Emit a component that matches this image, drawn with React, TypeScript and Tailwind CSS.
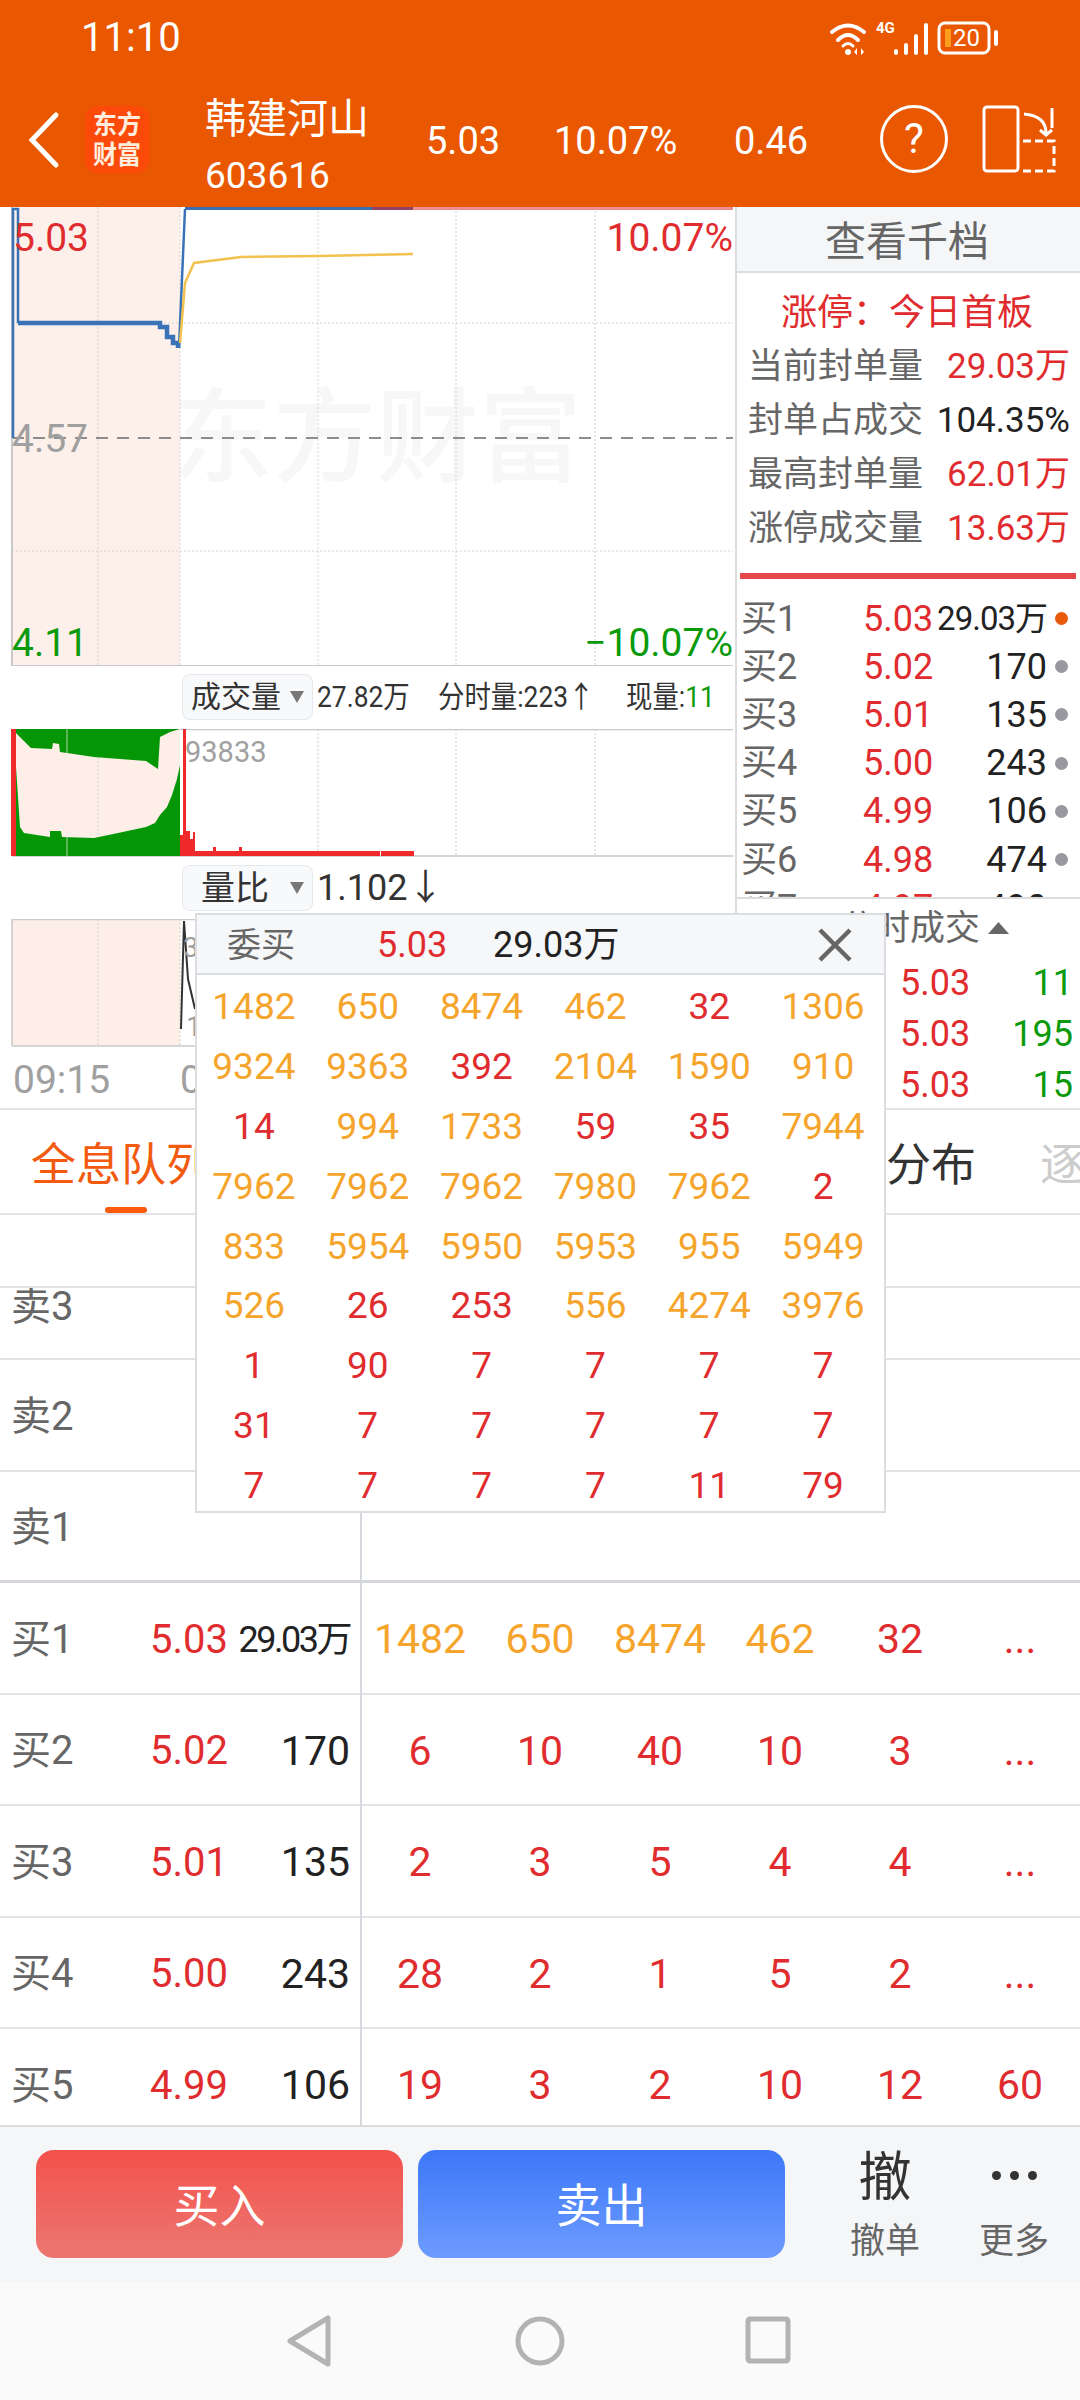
import type { ReactNode } from "react";

const FONT = "font-[Roboto,'Noto_Sans_CJK_SC',sans-serif]";

const popupRows = [
  [1482, 650, 8474, 462, 32, 1306],
  [9324, 9363, 392, 2104, 1590, 910],
  [14, 994, 1733, 59, 35, 7944],
  [7962, 7962, 7962, 7980, 7962, 2],
  [833, 5954, 5950, 5953, 955, 5949],
  [526, 26, 253, 556, 4274, 3976],
  [1, 90, 7, 7, 7, 7],
  [31, 7, 7, 7, 7, 7],
  [7, 7, 7, 7, 11, 79],
];

const sealStats = [
  { label: "当前封单量", value: "29.03万", red: true },
  { label: "封单占成交", value: "104.35%", red: false },
  { label: "最高封单量", value: "62.01万", red: true },
  { label: "涨停成交量", value: "13.63万", red: true },
];

const bidRows = [
  { name: "买1", price: "5.03", vol: "29.03万", active: true },
  { name: "买2", price: "5.02", vol: "170" },
  { name: "买3", price: "5.01", vol: "135" },
  { name: "买4", price: "5.00", vol: "243" },
  { name: "买5", price: "4.99", vol: "106" },
  { name: "买6", price: "4.98", vol: "474" },
  { name: "买7", price: "4.97", vol: "490" },
];

const queueRows = [
  { name: "买1", price: "5.03", vol: "29.03万", orders: [1482, 650, 8474, 462, 32] },
  { name: "买2", price: "5.02", vol: "170", orders: [6, 10, 40, 10, 3] },
  { name: "买3", price: "5.01", vol: "135", orders: [2, 3, 5, 4, 4] },
  { name: "买4", price: "5.00", vol: "243", orders: [28, 2, 1, 5, 2] },
  { name: "买5", price: "4.99", vol: "106", orders: [19, 3, 2, 10, 12, 60] },
];

function orderColor(n: number) {
  return n >= 400 ? "text-[#f5a42c]" : "text-[#e02c2e]";
}

function StatusBar() {
  return (
    <div className="flex h-[75px] items-center pl-[81px] pr-[82px] text-white">
      <span className="text-[40px] leading-none">11:10</span>
      <div className="ml-auto flex items-center">
        <svg width="166" height="36" viewBox="0 0 166 36" fill="none" stroke="#fff" strokeLinecap="round">
          <path d="M7 12 Q23 -1 39 12" strokeWidth="4" />
          <path d="M13 20 Q23 10 33 20" strokeWidth="4" />
          <path d="M18 26 Q23 21 28 26" strokeWidth="3" />
          <circle cx="23" cy="32" r="3" fill="#fff" stroke="none" />
          <path d="M32 28 L32 35 L29 32 Z M36 28 L36 35 L39 32 Z" fill="#fff" stroke="none" />
          <g strokeWidth="4">
            <path d="M71 31 V33 M81 25 V33 M91 16 V33 M101 5 V33" />
          </g>
          <rect x="114" y="3" width="50" height="30" rx="6" strokeWidth="3" />
          <rect x="120" y="9" width="6" height="18" fill="#ff9d1c" stroke="none" />
        </svg>
        <div className="relative">
          <span className="absolute left-[-115px] top-[-17px] text-[15px] font-bold leading-none">4G</span>
          <span className="absolute left-[-38px] top-[-12px] text-[24px] leading-none">20</span>
        </div>
        <div className="ml-[3px] h-[16px] w-[4px] rounded-full bg-white" />
      </div>
    </div>
  );
}

function HeaderBar() {
  return (
    <div className="flex h-[132px] items-start text-white">
      <svg className="ml-[26px] mt-[36px] shrink-0" width="36" height="58" viewBox="0 0 36 58" fill="none" stroke="#fff" strokeWidth="5" strokeLinecap="round">
        <path d="M30 4 L6 29 L30 54" />
      </svg>
      <div className="ml-[23px] mt-[31px] flex h-[67px] w-[64px] shrink-0 flex-col items-center justify-center rounded-[12px] bg-[#fb4a0a] text-[24px] font-bold leading-[30px] text-[#ffeede]">
        <span className="scale-y-110">东方</span>
        <span className="scale-y-110">财富</span>
      </div>
      <div className="ml-[56px] mt-[19px] w-[221px] shrink-0">
        <div className="text-[41px] leading-[50px]">韩建河山</div>
        <div className="mt-[12px] text-[37px] leading-[40px]">603616</div>
      </div>
      <div className="mt-[43px] flex text-[38px] leading-[46px]">
        <span className="w-[128px]">5.03</span>
        <span className="w-[180px]">10.07%</span>
        <span className="w-[146px]">0.46</span>
      </div>
      <div className="mt-[30px] flex h-[68px] w-[68px] shrink-0 items-center justify-center rounded-full border-[3px] border-white text-[42px] leading-none">?</div>
      <svg className="ml-[34px] mt-[30px] shrink-0" width="74" height="68" viewBox="0 0 74 68" fill="none" stroke="#fff" strokeWidth="3">
        <rect x="2" y="2" width="34" height="64" rx="3" />
        <path d="M41 36 H72 V66 H41" strokeDasharray="8 4" />
        <path d="M42 9 Q64 11 64 28 M70 3 V23 M58 25 L64 30 L70 25" />
      </svg>
    </div>
  );
}

function PriceChart() {
  return (
    <div className="relative h-[459px] w-[736px] overflow-hidden">
      <div className="absolute left-[170px] top-[180px] text-[103px] font-medium leading-none text-[#f7f7f7]">东方财富</div>
      <svg className="absolute inset-0" width="736" height="459" viewBox="0 0 736 459" fill="none">
        <rect x="12" y="0" width="168" height="459" fill="#fdeee8" fillOpacity="0.9" />
        <g stroke="#d2d2d2" strokeDasharray="2 2">
          <path d="M98 0 V459 M180 0 V459 M318 0 V459 M456 0 V459 M595 0 V459" />
          <path d="M12 116 H733 M12 344 H733" />
        </g>
        <path d="M12 231 H733" stroke="#8c8c8c" strokeWidth="2" strokeDasharray="12 9" />
        <path d="M12 0 V459 H733" stroke="#c9c9c9" strokeWidth="2" />
        <path d="M185 1.5 H372" stroke="#3a6fb5" strokeWidth="3" />
        <path d="M372 1.5 H413" stroke="#8f4263" strokeWidth="3" />
        <path d="M413 1.5 H733" stroke="#ee8d8d" strokeWidth="3" />
        <path d="M13 231 V2 H18 V116" stroke="#3a72b8" strokeWidth="2.5" />
        <path d="M18 116 H160 V120 H167 V130 H173 V136 H178 V141" stroke="#3a72b8" strokeWidth="4.5" />
        <path d="M179 141 L185 2" stroke="#3a72b8" strokeWidth="2.5" />
        <path d="M180 136 L185 76 L194 56 L241 50 L319 49 L413 47" stroke="#f2c14e" strokeWidth="2.5" />
      </svg>
      <span className="absolute left-[13px] top-[8px] text-[39px] leading-[46px] text-[#e02c2e]">5.03</span>
      <span className="absolute right-[3px] top-[8px] text-[39px] leading-[46px] text-[#e02c2e]">10.07%</span>
      <span className="absolute left-[12px] top-[209px] text-[39px] leading-[46px] text-[#a0a0a0]">4.57</span>
      <span className="absolute left-[12px] top-[413px] text-[39px] leading-[46px] text-[#0b9a0b]">4.11</span>
      <span className="absolute right-[3px] top-[413px] text-[39px] leading-[46px] text-[#0b9a0b]">−10.07%</span>
    </div>
  );
}

function Selector({ children, wide }: { children: ReactNode; wide?: boolean }) {
  return (
    <div className="ml-[182px] flex h-[46px] w-[131px] shrink-0 items-center rounded-[8px] border border-[#e6e8eb] bg-[#f8f9fb]">
      <span className={`leading-none text-[#333] ${wide ? "ml-[8px] w-[97px] text-[30px]" : "ml-[18px] w-[87px] text-[34px]"}`}>{children}</span>
      <svg width="16" height="14" viewBox="0 0 16 14" className="ml-[1px]">
        <path d="M1 1 H15 L8 13 Z" fill="#777" />
      </svg>
    </div>
  );
}

function Squeezed({ children, className }: { children: ReactNode; className?: string }) {
  return <span className={`inline-block origin-left scale-x-[0.88] whitespace-nowrap ${className ?? ""}`}>{children}</span>;
}

function VolumeChart() {
  return (
    <div className="relative h-[127px] w-[736px]">
      <svg className="absolute inset-0" width="736" height="128" viewBox="0 0 736 128" fill="none">
        <rect x="12" y="0" width="168" height="127" fill="#fdeee8" />
        <g stroke="#cfcfcf" strokeDasharray="2 2">
          <path d="M98 0 V127 M318 0 V127 M456 0 V127 M595 0 V127" />
        </g>
        <path d="M180 0.5 H733 M12 127 H733" stroke="#c9c9c9" strokeWidth="1.5" />
        <polygon points="16,0 180,0 170,3 160,8 158,40 146,32 94,28 60,23 59,15 53,14 52,20 31,19 16,4" fill="#059605" />
        <polygon points="16,38 20,98 24,104 50,108 50,102 61,102 62,108 94,109 118,104 146,98 155,94 160,86 167,78 172,66 177,50 180,36 180,127 16,127" fill="#059605" />
        <path d="M67 0 V127" stroke="#fdeee8" strokeOpacity="0.7" />
        <g fill="#f02a2a">
          <rect x="11" y="0" width="5" height="127" />
          <rect x="180" y="106" width="4" height="21" />
          <rect x="183" y="0" width="3" height="127" />
          <rect x="186" y="102" width="4" height="25" />
          <rect x="190" y="110" width="3" height="17" />
          <rect x="193" y="103" width="2" height="24" />
          <rect x="195" y="122" width="185" height="5" />
          <rect x="381" y="122" width="33" height="5" />
          <rect x="213" y="118" width="3" height="5" />
          <rect x="239" y="118" width="3" height="5" />
        </g>
      </svg>
      <span className="absolute left-[185px] top-[6px] text-[29px] leading-[34px] text-[#a0a0a0]">93833</span>
    </div>
  );
}

function RatioChart() {
  return (
    <div className="relative h-[128px] w-[736px]">
      <svg className="absolute inset-0" width="736" height="128" viewBox="0 0 736 128" fill="none">
        <rect x="12" y="0" width="168" height="127" fill="#fdeee8" />
        <path d="M98 0 V127 M180 0 V127" stroke="#cfcfcf" strokeDasharray="2 2" />
        <path d="M12 127 V0.5 H733 M12 127 H733" stroke="#c9c9c9" strokeWidth="1.5" />
        <path d="M181 110 L184 2 L188 60 L195 90" stroke="#333" strokeWidth="2" />
      </svg>
      <span className="absolute left-[183px] top-[12px] text-[28px] leading-[34px] text-[#a0a0a0]">3</span>
      <span className="absolute left-[186px] top-[91px] text-[28px] leading-[34px] text-[#a0a0a0]">1</span>
    </div>
  );
}

function ChartColumn() {
  return (
    <div className="h-[901px] w-[735px] shrink-0">
      <PriceChart />
      <div className="flex h-[63px] items-start pt-[8px]">
        <Selector wide>成交量</Selector>
        <div className="ml-[4px] flex text-[30px] leading-[46px] text-[#333]">
          <span className="w-[121px]"><Squeezed>27.82万</Squeezed></span>
          <span className="w-[188px]"><Squeezed>分时量:223↑</Squeezed></span>
          <Squeezed>现量:<span className="text-[#0b9a0b]">11</span></Squeezed>
        </div>
      </div>
      <VolumeChart />
      <div className="flex h-[63px] items-start pt-[9px]">
        <Selector>量比</Selector>
        <span className="ml-[4px] text-[36px] leading-[46px] text-[#333]">1.102↓</span>
      </div>
      <RatioChart />
      <div className="flex h-[62px] items-center pl-[13px] pt-[5px] text-[39px] leading-none text-[#a0a0a0]">
        <span className="w-[167px]">09:15</span>
        <span>09:30</span>
      </div>
    </div>
  );
}

function SidePanel() {
  return (
    <div className="h-[901px] flex-1 border-l-2 border-[#dcdcdc]">
      <div className="flex h-[66px] items-center justify-center border-b-2 border-[#dcdde0] bg-[#f5f6f8] pr-[3px] pt-[7px] text-[41px] leading-none text-[#666]">查看千档</div>
      <div className="pt-[12px]">
        <div className="pl-[44px] pt-[3px] text-[36px] leading-[51px] text-[#e02c2e]">涨停：今日首板</div>
        {sealStats.map((row) => (
          <div key={row.label} className="flex h-[54px] items-center justify-between pl-[11px] pr-[10px] pt-[1px]">
            <span className="text-[35px] leading-none text-[#666]">{row.label}</span>
            <span className={`text-[35px] leading-none ${row.red ? "text-[#e02c2e]" : "text-[#222]"}`}>{row.value}</span>
          </div>
        ))}
      </div>
      <div className="ml-[3px] mr-[4px] mt-[18px] h-[6px] bg-[#e5484a]" />
      <div className="mt-[14px] h-[304px] overflow-hidden">
        {bidRows.map((row) => (
          <div key={row.name} className="flex h-[48.2px] items-center pl-[4px] pt-[3px]">
            <span className="w-[122px] text-[36px] leading-none text-[#666]">{row.name}</span>
            <span className="w-[68px] text-[36px] leading-none text-[#e02c2e]">{row.price}</span>
            <span className={`w-[116px] whitespace-nowrap text-right leading-none text-[#222] ${row.active ? "text-[33px] tracking-[-1px]" : "text-[36px]"}`}>{row.vol}</span>
            <span className={`ml-[8px] h-[13px] w-[13px] rounded-full ${row.active ? "bg-[#e95b0c]" : "bg-[#98989e]"}`} />
          </div>
        ))}
      </div>
      <div className="flex h-[58px] items-center justify-end border-t-2 border-[#dcdcdc] pr-[70px] pt-[2px] text-[35px] leading-none text-[#666]">
        <span>分时成交</span>
        <svg className="ml-[7px]" width="23" height="14" viewBox="0 0 23 14">
          <path d="M11.5 1 L22 13 H1 Z" fill="#666" />
        </svg>
      </div>
      {["11", "195", "15"].map((vol, i) => (
        <div key={i} className="flex h-[51px] items-center justify-between pl-[163px] pr-[7px] pt-[5px] text-[36px] leading-none">
          <span className="text-[#e02c2e]">5.03</span>
          <span className="text-[#0b9a0b]">{vol}</span>
        </div>
      ))}
    </div>
  );
}

function TabBar() {
  return (
    <div className="relative flex h-[107px] items-start overflow-hidden whitespace-nowrap border-y-2 border-[#e3e4e6] pl-[31px] pt-[32px] text-[45px] leading-[48px]">
      <span className="w-[855px] shrink-0 text-[#f25a10]">全息队列</span>
      <span className="w-[154px] shrink-0 text-[#333]">分布</span>
      <span className="shrink-0 text-[#ccc]">逐笔</span>
      <div className="absolute bottom-0 left-[105px] h-[6px] w-[42px] rounded-full bg-[#f95a0b]" />
    </div>
  );
}

function OrderTable() {
  return (
    <div className="relative flex-1 overflow-hidden">
      <div className="h-[73px] border-b-2 border-[#e3e4e6]" />
      <div className="h-[72px] overflow-hidden border-b-2 border-[#e3e4e6] pl-[11px] text-[40px] leading-[38px] text-[#666]">卖3</div>
      <div className="flex h-[112px] items-center border-b-2 border-[#e3e4e6] pl-[11px] pt-[4px] text-[40px] leading-none text-[#666]">卖2</div>
      <div className="flex h-[111px] items-center border-b-[3px] border-[#d5d8dd] pl-[11px] pt-[4px] text-[40px] leading-none text-[#666]">卖1</div>
      {queueRows.map((row) => (
        <div key={row.name} className="flex h-[111.5px] items-center border-b-2 border-[#e3e4e6] pt-[4px] last:border-b-0">
          <span className="w-[150px] pl-[11px] text-[40px] leading-none text-[#666]">{row.name}</span>
          <span className="w-[80px] text-[40px] leading-none text-[#e02c2e]">{row.price}</span>
          <span className={`w-[120px] whitespace-nowrap text-right leading-none text-[#222] ${row.vol.length > 3 ? "text-[36px] tracking-[-2.5px]" : "text-[41px]"}`}>{row.vol}</span>
          <div className="ml-[10px] grid flex-1 grid-cols-6 text-center text-[41px] leading-none">
            {row.orders.map((n, i) => (
              <span key={i} className={orderColor(n)}>{n}</span>
            ))}
            {row.orders.length < 6 ? <span className="text-[#e02c2e]">...</span> : null}
          </div>
        </div>
      ))}
      <div className="absolute bottom-0 left-[360px] top-[297px] w-[2px] bg-[#d5d8dd]" />
    </div>
  );
}

function ActionBar() {
  return (
    <div className="flex h-[157px] border-t-2 border-[#dcdcdc] bg-[#f5f6f8] pl-[36px]">
      <div className="mt-[23px] flex h-[108px] w-[367px] items-center justify-center rounded-[18px] bg-gradient-to-b from-[#f3504b] to-[#ec7671] pt-[4px] text-[46px] leading-none text-white">买入</div>
      <div className="ml-[15px] mt-[23px] flex h-[108px] w-[367px] items-center justify-center rounded-[18px] bg-gradient-to-b from-[#3c77f7] to-[#6d9bff] pt-[4px] text-[46px] leading-none text-white">卖出</div>
      <div className="ml-[65px] flex w-[70px] flex-col items-center whitespace-nowrap pt-[22px]">
        <span className="h-[60px] text-[53px] leading-[58px] text-[#333]">撤</span>
        <span className="mt-[15px] text-[35px] leading-none text-[#666]">撤单</span>
      </div>
      <div className="ml-[59px] flex w-[70px] flex-col items-center whitespace-nowrap pt-[22px]">
        <div className="flex h-[60px] items-start gap-[9px] pt-[22px]">
          <span className="h-[9px] w-[9px] rounded-full bg-[#333]" />
          <span className="h-[9px] w-[9px] rounded-full bg-[#333]" />
          <span className="h-[9px] w-[9px] rounded-full bg-[#333]" />
        </div>
        <span className="mt-[15px] text-[35px] leading-none text-[#666]">更多</span>
      </div>
    </div>
  );
}

function NavBar() {
  return (
    <div className="flex h-[118px] items-start bg-[#fafafa] pl-[287px] pt-[33px]">
      <svg width="44" height="52" viewBox="0 0 44 52" fill="none" stroke="#b3b3b3" strokeWidth="5" strokeLinejoin="round">
        <path d="M41 3 V49 L3 26 Z" />
      </svg>
      <svg className="ml-[184px]" width="50" height="52" viewBox="0 0 50 52" fill="none" stroke="#b3b3b3" strokeWidth="5">
        <circle cx="25" cy="26" r="22" />
      </svg>
      <svg className="ml-[180px]" width="46" height="50" viewBox="0 0 46 50" fill="none" stroke="#b3b3b3" strokeWidth="5">
        <rect x="3" y="4" width="40" height="42" rx="2" />
      </svg>
    </div>
  );
}

function QueuePopup() {
  return (
    <div className="absolute left-[195px] top-[913px] h-[600px] w-[691px] border-2 border-[#dcdde0] bg-white">
      <div className="flex h-[60px] items-center border-b-2 border-[#dcdde0] bg-[#f6f7f9] pl-[30px] pt-[2px]">
        <span className="w-[150px] text-[34px] leading-none text-[#666]">委买</span>
        <span className="w-[116px] text-[36px] leading-none text-[#e02c2e]">5.03</span>
        <span className="text-[36px] leading-none text-[#222]">29.03万</span>
        <svg className="ml-auto mr-[32px]" width="34" height="34" viewBox="0 0 34 34" fill="none" stroke="#666" strokeWidth="4.5">
          <path d="M2 2 L32 32 M32 2 L2 32" />
        </svg>
      </div>
      <div className="pr-[4px] pt-[2px]">
        {popupRows.map((row, r) => (
          <div key={r} className="grid h-[59.8px] grid-cols-6 items-center text-center text-[37px] leading-none">
            {row.map((n, c) => (
              <span key={c} className={orderColor(n)}>{n}</span>
            ))}
          </div>
        ))}
      </div>
    </div>
  );
}

export default function App() {
  return (
    <div className={`relative flex h-[2400px] w-[1080px] flex-col overflow-hidden bg-white ${FONT}`}>
      <div className="h-[207px] shrink-0 bg-[#e95700]">
        <StatusBar />
        <HeaderBar />
      </div>
      <div className="flex shrink-0">
        <ChartColumn />
        <SidePanel />
      </div>
      <TabBar />
      <OrderTable />
      <ActionBar />
      <NavBar />
      <QueuePopup />
    </div>
  );
}
